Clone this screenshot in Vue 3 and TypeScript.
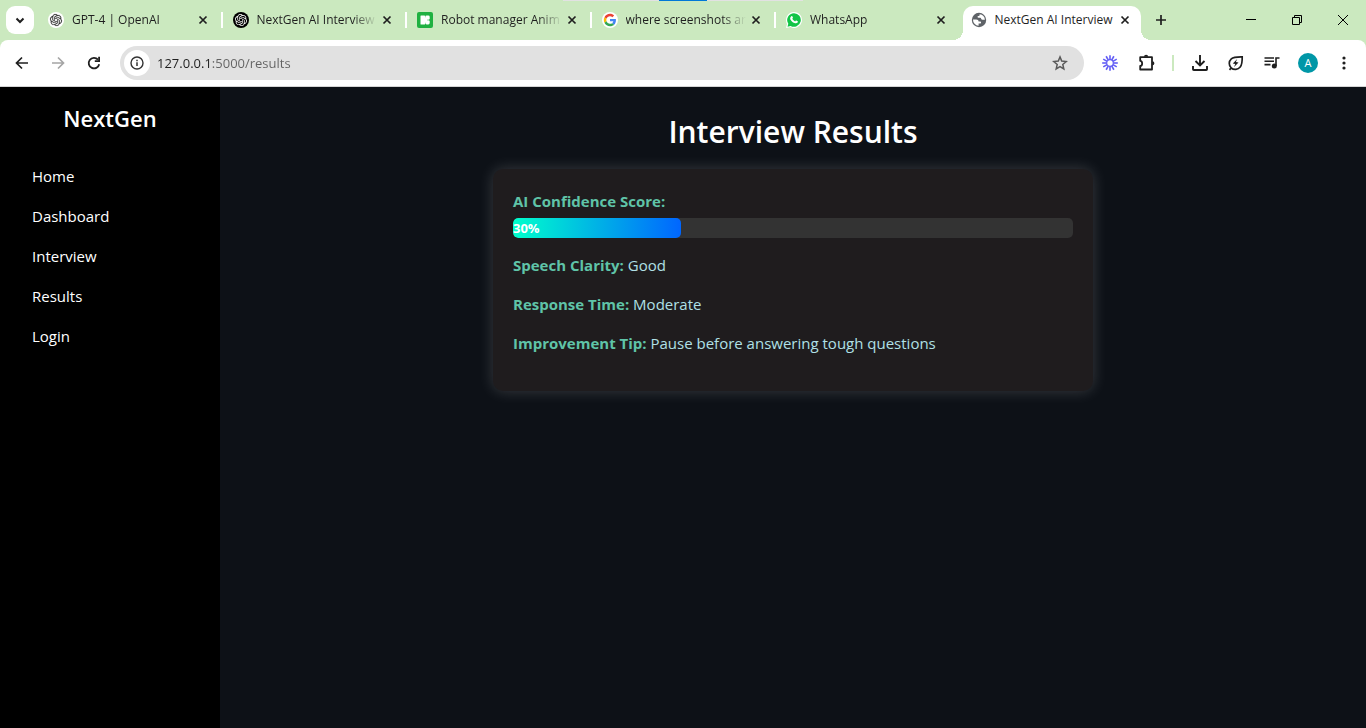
<script setup lang="ts">
import { ref } from 'vue'

type IconName = 'openai' | 'openai-dark' | 'icons8' | 'google' | 'whatsapp' | 'globe'

interface Tab {
  title: string
  icon: IconName
  active?: boolean
}

interface Result {
  label: string
  value: string
}

const tabs: Tab[] = [
  { title: 'GPT-4 | OpenAI', icon: 'openai' },
  { title: 'NextGen AI Interview', icon: 'openai-dark' },
  { title: 'Robot manager Anim', icon: 'icons8' },
  { title: 'where screenshots are', icon: 'google' },
  { title: 'WhatsApp', icon: 'whatsapp' },
  { title: 'NextGen AI Interview', icon: 'globe', active: true },
]

const links: string[] = ['Home', 'Dashboard', 'Interview', 'Results', 'Login']

const results: Result[] = [
  { label: 'Speech Clarity:', value: 'Good' },
  { label: 'Response Time:', value: 'Moderate' },
  { label: 'Improvement Tip:', value: 'Pause before answering tough questions' },
]

const score = 30
const address = ref('127.0.0.1:5000/results')

const knot =
  'M22.2819 9.8211a5.9847 5.9847 0 0 0-.5157-4.9108 6.0462 6.0462 0 0 0-6.5098-2.9A6.0651 6.0651 0 0 0 4.9807 4.1818a5.9847 5.9847 0 0 0-3.9977 2.9 6.0462 6.0462 0 0 0 .7427 7.0966 5.98 5.98 0 0 0 .511 4.9107 6.051 6.051 0 0 0 6.5146 2.9001A5.9847 5.9847 0 0 0 13.2599 24a6.0557 6.0557 0 0 0 5.7718-4.2058 5.9894 5.9894 0 0 0 3.9977-2.9001 6.0557 6.0557 0 0 0-.7475-7.0729zm-9.022 12.6081a4.4755 4.4755 0 0 1-2.8764-1.0408l.1419-.0804 4.7783-2.7582a.7948.7948 0 0 0 .3927-.6813v-6.7369l2.02 1.1686a.071.071 0 0 1 .038.052v5.5826a4.504 4.504 0 0 1-4.4945 4.4944zm-9.6607-4.1254a4.4708 4.4708 0 0 1-.5346-3.0137l.142.0852 4.783 2.7582a.7712.7712 0 0 0 .7806 0l5.8428-3.3685v2.3324a.0804.0804 0 0 1-.0332.0615L9.74 19.9502a4.4992 4.4992 0 0 1-6.1408-1.6464zM2.3408 7.8956a4.485 4.485 0 0 1 2.3655-1.9728V11.6a.7664.7664 0 0 0 .3879.6765l5.8144 3.3543-2.0201 1.1685a.0757.0757 0 0 1-.071 0l-4.8303-2.7865A4.504 4.504 0 0 1 2.3408 7.872zm16.5963 3.8558L13.1038 8.364 15.1192 7.2a.0757.0757 0 0 1 .071 0l4.8303 2.7913a4.4944 4.4944 0 0 1-.6765 8.1042v-5.6772a.79.79 0 0 0-.407-.667zm2.0107-3.0231l-.142-.0852-4.7735-2.7818a.7759.7759 0 0 0-.7854 0L9.409 9.2297V6.8974a.0662.0662 0 0 1 .0284-.0615l4.8303-2.7866a4.4992 4.4992 0 0 1 6.6802 4.66zM8.3065 12.863l-2.02-1.1638a.0804.0804 0 0 1-.038-.0567V6.0742a4.4992 4.4992 0 0 1 7.3757-3.4537l-.142.0805L8.704 5.459a.7948.7948 0 0 0-.3927.6813zm1.0976-2.3654l2.602-1.4998 2.6069 1.4998v2.9994l-2.5974 1.4997-2.6067-1.4997Z'

const burst: number[] = Array.from({ length: 12 }, (_, i) => i * 30)
</script>

<template>
  <div class="window">
    <div class="handle"></div>
    <header class="strip">
      <button class="search-tabs" type="button" aria-label="Search tabs">
        <svg width="12" height="12" viewBox="0 0 12 12"><path d="M2.5 4.5 6 8l3.500-3.500" fill="none" stroke="#1f1f1f" stroke-width="2" /></svg>
      </button>
      <div class="tabs">
        <div v-for="(tab, i) in tabs" :key="i" class="tab" :class="{ active: tab.active }">
          <svg v-if="tab.icon === 'openai'" class="favicon" viewBox="0 0 16 16">
            <circle cx="8" cy="8" r="8" fill="#fff" />
            <path :d="knot" transform="translate(2 2) scale(.5)" fill="#333" stroke="#333" stroke-width=".3" />
          </svg>
          <svg v-else-if="tab.icon === 'openai-dark'" class="favicon" viewBox="0 0 16 16">
            <circle cx="8" cy="8" r="8" fill="#000" />
            <path :d="knot" transform="translate(2 2) scale(.5)" fill="#fff" />
          </svg>
          <svg v-else-if="tab.icon === 'icons8'" class="favicon" viewBox="0 0 16 16">
            <rect width="16" height="16" rx="2" fill="#1fb141" />
            <rect x="3.500" y="3.500" width="4.500" height="9" rx=".5" fill="#fff" />
            <rect x="8.200" y="3.500" width="4.500" height="4.300" rx="1.400" fill="#fff" />
            <rect x="8.200" y="8.200" width="4.500" height="4.300" rx="1.400" fill="#fff" />
            <path d="M7 5.500h3v5H7z" fill="#fff" />
          </svg>
          <svg v-else-if="tab.icon === 'google'" class="favicon" viewBox="0 0 16 16">
            <circle cx="8" cy="8" r="8" fill="#fff" />
            <g transform="translate(1.800 1.800) scale(.2583)">
              <path fill="#EA4335" d="M24 9.500c3.540 0 6.710 1.220 9.210 3.600l6.850-6.850C35.900 2.380 30.470 0 24 0 14.620 0 6.510 5.380 2.560 13.220l7.980 6.190C12.430 13.720 17.740 9.500 24 9.500z" />
              <path fill="#4285F4" d="M46.980 24.550c0-1.570-.15-3.090-.38-4.550H24v9.020h12.940c-.58 2.960-2.260 5.480-4.780 7.180l7.730 6c4.510-4.180 7.090-10.360 7.090-17.650z" />
              <path fill="#FBBC05" d="M10.530 28.590c-.48-1.450-.76-2.990-.76-4.590s.27-3.140.76-4.590l-7.980-6.190C.92 16.460 0 20.120 0 24c0 3.880.92 7.540 2.560 10.780l7.970-6.190z" />
              <path fill="#34A853" d="M24 48c6.480 0 11.930-2.130 15.890-5.810l-7.730-6c-2.150 1.450-4.920 2.300-8.160 2.300-6.260 0-11.570-4.220-13.470-9.910l-7.980 6.190C6.510 42.620 14.620 48 24 48z" />
            </g>
          </svg>
          <svg v-else-if="tab.icon === 'whatsapp'" class="favicon" viewBox="0 0 16 16">
            <path d="M8 0a8 8 0 1 1-3.700 15.100L0 16l1-4.100A8 8 0 0 1 8 0z" fill="#fff" />
            <path d="M8 1.200a6.800 6.800 0 1 1-3.400 12.700l-3.100.8.8-3A6.800 6.800 0 0 1 8 1.200z" fill="#12c546" />
            <path d="M5.300 4.200c.3-.3.800-.3 1 .1l.6 1.300c.1.3 0 .5-.6 1.200.6 1.200 1.500 2 2.800 2.600.8-1 .9-1 1.200-.9l1.400.7c.3.200.3.900-.1 1.400-.7.800-1.900.9-3.200.4-1.900-.7-3.300-2.100-4-3.600-.5-1.200-.1-2.400.9-3.200z" fill="#fff" />
          </svg>
          <svg v-else class="favicon" viewBox="0 0 16 16">
            <circle cx="8" cy="8" r="7.200" fill="#5f6368" />
            <path d="M2 7.600h3.200c1.600 0 2.400.8 2.400 1.900h1.600c.6 0 .9.400.9 1s-.3 1-.9 1H7.600v2.300A6 6 0 0 1 2 7.600zM8.600 2.200v.7c0 .7-.5 1.100-1.200 1.100-.6 0-.9.300-.9.800 0 .6.4.9 1 .9h1.700c.6 0 .9.400.9.900 0 .7.500 1.100 1.200 1.100h2.600A6 6 0 0 0 8.600 2.200z" fill="#fff" />
          </svg>
          <span class="title">{{ tab.title }}</span>
          <button class="close" type="button" aria-label="Close tab">
            <svg width="10" height="10" viewBox="0 0 10 10"><path d="m1.500 1.500 7 7M8.500 1.500l-7 7" stroke="#1f1f1f" stroke-width="1.700" /></svg>
          </button>
        </div>
      </div>
      <button class="new-tab" type="button" aria-label="New tab">
        <svg width="12" height="12" viewBox="0 0 12 12"><path d="M6 1v10M1 6h10" stroke="#1f1f1f" stroke-width="1.700" /></svg>
      </button>
      <div class="controls">
        <button type="button" aria-label="Minimize">
          <svg width="10" height="10" viewBox="0 0 10 10"><path d="M0 4.500h10" stroke="#000" /></svg>
        </button>
        <button type="button" aria-label="Restore">
          <svg width="10" height="10" viewBox="0 0 10 10"><path d="M.5 2.500h7v7h-7zM2.500 2.500v-2h7v7h-2" fill="none" stroke="#000" /></svg>
        </button>
        <button type="button" aria-label="Close window">
          <svg width="10" height="10" viewBox="0 0 10 10"><path d="m0 0 10 10M10 0 0 10" stroke="#000" /></svg>
        </button>
      </div>
    </header>

    <div class="toolbar">
      <button type="button" aria-label="Back">
        <svg width="20" height="20" viewBox="0 0 20 20"><path d="M16 10H5M10 4.500 4.500 10l5.500 5.500" fill="none" stroke="#1f1f1f" stroke-width="1.700" /></svg>
      </button>
      <button type="button" aria-label="Forward">
        <svg width="20" height="20" viewBox="0 0 20 20"><path d="M4 10h11M10 4.500l5.500 5.500-5.500 5.500" fill="none" stroke="#a5a5a5" stroke-width="1.700" /></svg>
      </button>
      <button type="button" aria-label="Reload">
        <svg width="20" height="20" viewBox="0 0 20 20">
          <path d="M15.200 11.200A5.300 5.300 0 1 1 14 6.600" fill="none" stroke="#1f1f1f" stroke-width="1.800" />
          <path d="M16 3.800V9h-5.200V7.300h3.400V3.800z" fill="#1f1f1f" />
        </svg>
      </button>
      <div class="omnibox">
        <button class="site" type="button" aria-label="View site information">
          <svg width="16" height="16" viewBox="0 0 16 16">
            <circle cx="8" cy="8" r="6" fill="none" stroke="#333" stroke-width="1.400" />
            <path d="M8 7.200V11M8 4.700v1.500" stroke="#333" stroke-width="1.500" />
          </svg>
        </button>
        <input v-model="address" class="address" type="text" aria-label="Address bar" />
        <button class="star" type="button" aria-label="Bookmark this tab">
          <svg width="18" height="18" viewBox="0 0 18 18"><path d="m9 2.900 1.700 4.200 4.500.4-3.400 3 1 4.400L9 12.600l-3.800 2.300 1-4.400-3.400-3 4.500-.4z" fill="none" stroke="#5a5a5a" stroke-width="1.500" /></svg>
        </button>
      </div>
      <button type="button" aria-label="Loom extension">
        <svg width="16" height="16" viewBox="0 0 16 16">
          <circle cx="8" cy="8" r="3.300" fill="none" stroke="#625df5" stroke-width="1.200" />
          <path v-for="a in burst" :key="a" d="M8 .2v4.500" :transform="`rotate(${a} 8 8)`" stroke="#625df5" stroke-width="1.600" />
        </svg>
      </button>
      <button type="button" aria-label="Extensions">
        <svg width="20" height="20" viewBox="0 0 20 20">
          <path d="M4.200 4.200h11.800v12.300H4.200v-3.500c2.600-.2 2.600-5 0-5.200z" fill="none" stroke="#1f1f1f" stroke-width="1.800" stroke-linejoin="round" />
          <path d="M8 3.800a2.100 2.100 0 0 1 4.200 0zM16.300 8.200a2.100 2.100 0 0 1 0 4.200z" fill="#1f1f1f" />
        </svg>
      </button>
      <span class="divider"></span>
      <button type="button" aria-label="Downloads">
        <svg width="20" height="20" viewBox="0 0 20 20">
          <path d="M10 2v10M5.500 8l4.500 4.500L14.500 8M3 13v3.200q0 .8.800.8h12.400q.8 0 .8-.8V13" fill="none" stroke="#1f1f1f" stroke-width="1.900" />
        </svg>
      </button>
      <button type="button" aria-label="Energy saver">
        <svg width="20" height="20" viewBox="0 0 20 20">
          <path d="M3.500 16.800 5 15.200M5.200 15C2.500 12.200 2.700 8.200 5.300 5.800 7.800 3.600 12 3.800 16.200 3.800c.1 4 .2 7.500-2 10.200-2.200 2.800-6.300 3.300-9 1z" fill="none" stroke="#1f1f1f" stroke-width="1.700" />
          <path d="m11.200 6-4.400 4.500 2.500.5-1.300 3 4.500-4.500-2.600-.5z" fill="#1f1f1f" />
        </svg>
      </button>
      <button type="button" aria-label="Media control">
        <svg width="20" height="20" viewBox="0 0 20 20">
          <path d="M2.500 5h9.500M2.500 8.300h9.500M2.500 11.600h6M17.500 5H14v8" fill="none" stroke="#1f1f1f" stroke-width="1.600" />
          <circle cx="12.300" cy="13" r="2.500" fill="#1f1f1f" />
        </svg>
      </button>
      <button type="button" aria-label="Profile"><span class="avatar">A</span></button>
      <button type="button" aria-label="Menu">
        <svg width="4" height="16" viewBox="0 0 4 16"><g fill="#1f1f1f"><circle cx="2" cy="3" r="1.600" /><circle cx="2" cy="8" r="1.600" /><circle cx="2" cy="13" r="1.600" /></g></svg>
      </button>
    </div>

    <div class="page">
      <aside class="sidebar">
        <h2>NextGen</h2>
        <nav>
          <a v-for="link in links" :key="link" href="#">{{ link }}</a>
        </nav>
      </aside>
      <main class="content">
        <h1>Interview Results</h1>
        <section class="card">
          <p><strong id="score-label">AI Confidence Score:</strong></p>
          <div class="track" role="progressbar" aria-labelledby="score-label" :aria-valuenow="score" aria-valuemin="0" aria-valuemax="100">
            <div class="fill" :style="{ width: score + '%' }">{{ score }}%</div>
          </div>
          <p v-for="item in results" :key="item.label" class="row">
            <strong>{{ item.label }}</strong> {{ item.value }}
          </p>
        </section>
      </main>
    </div>
  </div>
</template>

<style>
body {
  margin: 0;
  background: #0d1117;
}
</style>

<style scoped>
.window {
  position: relative;
  display: flex;
  flex-direction: column;
  min-height: 100vh;
  background: #cbe9bf;
  font-family: "Open Sans", "Noto Sans", sans-serif;
}

button {
  display: flex;
  align-items: center;
  justify-content: center;
  flex: none;
  padding: 0;
  border: 0;
  background: none;
  font: inherit;
}

.handle {
  position: absolute;
  top: 0;
  left: 50%;
  width: 240px;
  height: 1px;
  transform: translateX(-50%);
  background: linear-gradient(to right, #e2e2e2 40%, #0078d7 40% 60%, #e2e2e2 60%);
}

.strip {
  display: flex;
  height: 40px;
}

.search-tabs {
  width: 28px;
  height: 28px;
  margin: 6px 4px 0 6px;
  border-radius: 9px;
  background: #fff;
}

.tabs {
  display: flex;
  flex: 1;
  min-width: 0;
  padding-top: 6px;
}

.tab {
  position: relative;
  display: flex;
  flex: 1;
  align-items: center;
  box-sizing: border-box;
  min-width: 0;
  height: 34px;
  padding: 0 12px 6px 10px;
}

.tab:not(.active)::after {
  content: "";
  position: absolute;
  top: 6px;
  right: 0;
  width: 2px;
  height: 16px;
  background: #fff;
}

.tab:nth-last-child(2)::after {
  display: none;
}

.tab.active {
  margin: 0 5px 0 2px;
  padding: 0 8px 6px;
  border-radius: 10px 10px 0 0;
  background: #fff;
}

.tab.active::before,
.tab.active::after {
  content: "";
  position: absolute;
  bottom: 0;
  width: 10px;
  height: 10px;
}

.tab.active::before {
  right: 100%;
  background: radial-gradient(circle at 0 0, transparent 10px, #fff 10px);
}

.tab.active::after {
  left: 100%;
  background: radial-gradient(circle at 100% 0, transparent 10px, #fff 10px);
}

.favicon {
  flex: none;
  width: 16px;
  height: 16px;
}

.title {
  flex: 1;
  min-width: 0;
  margin: 0 2px 0 8px;
  overflow: hidden;
  color: #1f1f1f;
  font-size: 12px;
  line-height: 16px;
  white-space: nowrap;
  mask-image: linear-gradient(to right, #000 calc(100% - 24px), transparent);
}

.active .title {
  mask-image: none;
}

.close {
  width: 16px;
  height: 16px;
}

.new-tab {
  width: 28px;
  height: 28px;
  margin: 6px 53px 0 1px;
}

.controls {
  display: flex;
}

.controls button {
  width: 46px;
  height: 40px;
}

.toolbar {
  display: flex;
  align-items: center;
  height: 46px;
  padding: 0 4px;
  border-bottom: 1px solid #d5d5d5;
  border-radius: 8px 8px 0 0;
  background: #fff;
}

.toolbar > button {
  width: 36px;
  height: 34px;
}

.omnibox {
  display: flex;
  flex: 1;
  align-items: center;
  min-width: 0;
  height: 34px;
  margin: 0 8px;
  border-radius: 17px;
  background: #e1e1e1;
}

.omnibox .site {
  width: 26px;
  height: 26px;
  margin: 0 7px 0 4px;
  border-radius: 50%;
  background: #fff;
}

.address {
  flex: 1;
  min-width: 0;
  padding: 0;
  border: 0;
  outline: 0;
  background: linear-gradient(to right, #1f1f1f 55px, #626262 55px);
  background-clip: text;
  color: transparent;
  font: 13px/20px "Open Sans", "Noto Sans", sans-serif;
}

.star {
  width: 28px;
  height: 28px;
  margin-right: 10px;
}

.divider {
  width: 2px;
  height: 16px;
  margin: 0 8px;
  background: #cbe9bf;
}

.avatar {
  width: 20px;
  height: 20px;
  border-radius: 50%;
  background: #0097a7;
  color: #fff;
  font-size: 11px;
  line-height: 20px;
  text-align: center;
}

.page {
  display: flex;
  flex: 1;
  background: #0d1117;
}

.sidebar {
  flex: none;
  width: 220px;
  background: #000;
  color: #fff;
}

.sidebar h2 {
  margin: 15px 0 30px;
  font-size: 22px;
  font-weight: 600;
  line-height: 32px;
  text-align: center;
}

.sidebar nav {
  display: flex;
  flex-direction: column;
  gap: 16px;
  padding: 0 32px;
}

.sidebar a {
  color: #fff;
  font-size: 15px;
  line-height: 24px;
  text-decoration: none;
}

.content {
  flex: 1;
  min-width: 0;
  padding: 20px;
}

.content h1 {
  margin: 0 0 12px;
  color: #fff;
  font-size: 30px;
  font-weight: 600;
  line-height: 50px;
  text-align: center;
}

.card {
  box-sizing: border-box;
  max-width: 600px;
  margin: 0 auto;
  padding: 20px 20px 21px;
  border-radius: 10px;
  background: #1f1c1e;
  box-shadow: 0 0 15px rgba(255, 255, 255, 0.18);
  color: #b0e0e6;
  font-size: 15px;
  line-height: 24px;
}

.card p {
  margin: 0;
}

.card .row {
  margin-bottom: 15px;
}

.card strong {
  color: #5fc4a8;
  font-weight: 700;
}

.track {
  height: 20px;
  margin: 5px 0 15px;
  overflow: hidden;
  border-radius: 5px;
  background: #333;
}

.fill {
  height: 100%;
  border-radius: 5px;
  background: linear-gradient(to right, #00ffcc, #0066ff);
  color: #fff;
  font-size: 13px;
  font-weight: 700;
  line-height: 20px;
}
</style>
